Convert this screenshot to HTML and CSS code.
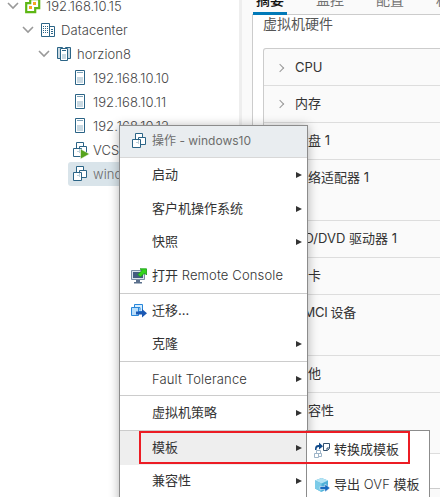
FILE: index.html
```html
<!DOCTYPE html>
<html lang="zh-CN">
<head>
<meta charset="utf-8">
<title>vSphere</title>
<link rel="stylesheet" href="styles.css">
</head>
<body>
<svg width="0" height="0" class="defs">
  <symbol id="chev" viewBox="0 0 12 8"><path d="M1 1l5 5 5-5" fill="none" stroke="#999" stroke-width="1.6"/></symbol>
  <symbol id="host" viewBox="0 0 16 16"><path d="M3.5.5h9v14h-9z" fill="#fff" stroke="#2b6486"/><path d="M5 2.500h6" stroke="#7fa3b8"/><path d="M5 7h6v6H5z" fill="#c9d9e2"/></symbol>
  <symbol id="vm" viewBox="0 0 16 16"><path d="M4.500.5h7v9h-7z" fill="#fff" stroke="#2b6486"/><path d="M7.500 4.500h7v7h-7z" fill="#fff" stroke="#2b6486"/><path d="M1.500 6.500h8v8h-8z" fill="#fff" stroke="#2b6486"/><path d="M7.500 7v4M5 9.500h2" stroke="#bdd0da"/></symbol>
</svg>
<div class="app">
  <nav class="tree">
    <div class="node l0"><svg class="chev"><use href="#chev"/></svg>
      <svg class="ico" viewBox="0 0 16 16"><path d="M5.200 1.200h9v9h-4v4h-9v-9h4z" fill="#fff" stroke="#5eb715" stroke-width="2.200"/><path d="M8 4h3v3H8zM4 8h3v3H4z" fill="#f6a623"/></svg><span>192.168.10.15</span></div>
    <div class="node l1"><svg class="chev"><use href="#chev"/></svg>
      <svg class="ico" viewBox="0 0 16 16"><path d="M1.500 1.500h8v13h-8zM9.500 4.500h5v10h-5z" fill="#fff" stroke="#2b6486"/><path d="M3 4.500h5.500M3 6.500h5.500M3 8.500h5.500M3 10.500h5.500" stroke="#2b6486" stroke-dasharray="1 1"/><path d="M11 7.500h2M11 9.500h2M11 11.500h2" stroke="#2b6486"/></svg><span>Datacenter</span></div>
    <div class="node l2"><svg class="chev"><use href="#chev"/></svg>
      <svg class="ico" viewBox="0 0 16 16"><path d="M1.500 1.500h5v11h-5zM9.500 1.500h5v11h-5z" fill="#c9d9e2" stroke="#2b6486"/><path d="M4.500 2.500h7v12h-7z" fill="#fff" stroke="#2b6486"/><path d="M6 4.500h4" stroke="#2b6486"/><path d="M6 8h4v5H6z" fill="#c9d9e2"/></svg><span>horzion8</span></div>
    <div class="node l3"><svg class="ico"><use href="#host"/></svg><span>192.168.10.10</span></div>
    <div class="node l3"><svg class="ico"><use href="#host"/></svg><span>192.168.10.11</span></div>
    <div class="node l3"><svg class="ico"><use href="#host"/></svg><span>192.168.10.12</span></div>
    <div class="node l3"><svg class="ico" viewBox="0 0 16 16"><use href="#vm"/><path d="M8.500 7l9 5-9 5z" fill="#56a31c" stroke="#fff" stroke-width=".5"/></svg><span>VCSA</span></div>
    <div class="node l3 selected"><svg class="ico"><use href="#vm"/></svg><span>windows10</span></div>
  </nav>
  <main class="main">
    <div class="tabs"><span class="tab active">摘要</span><span class="tab">监控</span><span class="tab">配置</span><span class="tab">权限</span></div>
    <section class="card">
      <h2>虚拟机硬件</h2>
      <div class="hardware">
        <div class="row latin"><i class="gt"></i>CPU</div>
        <div class="row"><i class="gt"></i>内存</div>
        <div class="row"><i class="gt"></i>硬盘 1</div>
        <div class="row tall"><i class="gt"></i>网络适配器 1</div>
        <div class="row"><i class="gt"></i>CD/DVD 驱动器 1</div>
        <div class="row"><i class="gt"></i>显卡</div>
        <div class="row tall tight"><i class="gt"></i>VMCI 设备</div>
        <div class="row"><i class="gt"></i>其他</div>
        <div class="row tall"><i class="gt"></i>兼容性</div>
      </div>
    </section>
  </main>
</div>
<div class="menu">
  <div class="head"><svg class="ico"><use href="#vm"/></svg><span>操作 - windows10</span></div>
  <div class="group g4">
    <div class="item sub"><span>启动</span></div>
    <div class="item sub"><span>客户机操作系统</span></div>
    <div class="item sub"><span>快照</span></div>
    <div class="item"><svg class="ico" viewBox="0 0 16 16"><path d="M.5 2.500h13v9H.5z" fill="#dbe3ec" stroke="#7b8da3"/><path d="M2 4h10v6H2z" fill="#435c80"/><path d="M5 12h4v2h2v1.500H3V14h2z" fill="#5b708c"/><path d="M9 .8h6.500V7l-2-2L9.500 9 7 6.500l4-4z" fill="#35d51c" stroke="#159a13" stroke-width=".8"/></svg><span>打开 <b>Remote Console</b></span></div>
  </div>
  <div class="group g2">
    <div class="item"><svg class="ico" viewBox="0 0 16 16"><path d="M3.500 1.500h8v7h-8z" fill="#d6edff" stroke="#2786d9"/><path d="M.5 4.500h7v8h-7z" fill="#b9defb" stroke="#2786d9"/><path d="M6 4.500h3v3" fill="none" stroke="#2786d9"/><path d="M5 8.500h6V6l5 4.200-5 4.300v-3H5z" fill="#1b58b3"/></svg><span>迁移...</span></div>
    <div class="item sub"><span>克隆</span></div>
  </div>
  <div class="group g1"><div class="item sub"><b>Fault Tolerance</b></div></div>
  <div class="group policy"><div class="item sub"><span>虚拟机策略</span></div></div>
  <div class="group last">
    <div class="item sub hover"><span>模板</span></div>
    <div class="item sub"><span>兼容性</span></div>
  </div>
</div>
<div class="submenu">
  <div class="item"><svg class="ico" viewBox="0 0 16 16"><path d="M9.500 1.500h6v5l-2 2h-4z" fill="#fff" stroke="#34516e"/><path d="M13 8V6h2" fill="none" stroke="#34516e"/><path d="M1 8c0-4 1-5 4-5V.5L9 4.200 5 7.500V5C3 5 2.500 6 2.500 8z" fill="#124b8b"/><path d="M2.500 8.500h4v3h-4zM.5 11.500h4v4h-4zM4.500 11.500h3v3h-3z" fill="#fff" stroke="#9db4c8"/></svg><span>转换成模板</span></div>
  <div class="item"><svg class="ico" viewBox="0 0 16 16"><path d="M7.500 1L14 3.500v8L7.500 15 1 11.500v-8z" fill="#4fb0d8"/><path d="M7.500 1L14 3.500 7.500 6.500 1 3.500z" fill="#b5e4f4"/><path d="M1 3.500l6.500 3V15L1 11.500z" fill="#7bcbe8"/><path d="M6 9.500h5V7l5 4-5 4v-2.500H6z" fill="#1769bf" stroke="#fff" stroke-width=".5"/></svg><span>导出 <b>OVF</b> 模板</span></div>
</div>
<div class="highlight"></div>
</body>
</html>
```
FILE: styles.css
```css
* { box-sizing: border-box; }
body {
  margin: 0;
  width: 440px;
  height: 497px;
  overflow: hidden;
  position: relative;
  background: #fff;
  color: #333;
  font: 13px/24px Inter, "Noto Sans CJK SC", sans-serif;
}
.defs { position: absolute; }
.app { display: flex; height: 497px; overflow: hidden; }
.ico { width: 16px; height: 16px; flex: none; overflow: visible; }

.tree { width: 239px; flex: none; margin-top: -6px; color: #454545; letter-spacing: .08px; }
.node { height: 24px; display: flex; align-items: center; padding-bottom: 1px; }
.node span { margin-left: 5px; font-weight: 350; }
.chev { width: 12px; height: 8px; margin-right: 6px; }
.l0 { padding-left: 7px; }
.l1 { padding-left: 22px; }
.l2 { padding-left: 38px; }
.l3 { margin-left: 68px; padding-left: 4px; }
.selected { background: #d9e4ea; border-radius: 3px 0 0 3px; color: #6a6a6a; }

.main { flex: none; width: 260px; border-left: 3px solid #eee; background: #fafafa; padding-left: 10px; }
.tabs { height: 14px; display: flex; gap: 26px; padding-left: 1px; color: #737373; font-size: 14px; }
.tab { width: 34px; height: 25px; line-height: 20px; margin-top: -10px; padding-left: 3px; white-space: nowrap; position: relative; }
.active { color: #111; font-weight: 500; border-bottom: 3px solid #0079b8; }
.card { height: 475px; border: 1px solid #ccc; background: #fff; padding-left: 10px; }
h2 { margin: 0; height: 33px; font-size: 14px; line-height: 18px; font-weight: 400; color: #565656; }
.hardware { border: 1px solid #ccc; border-bottom: 0; border-radius: 3px 0 0 0; background: #fafafa; }
.row { height: 37px; border-bottom: 1px solid #ddd; display: flex; padding: 5px 0 0 15px; white-space: nowrap; }
.latin { padding-top: 6px; }
.tall { height: 61px; }
.tight { letter-spacing: -.35px; }
.gt { width: 6px; height: 6px; margin: 10px 12px 0 -2px; border: solid #999; border-width: 1.5px 1.5px 0 0; transform: rotate(45deg); flex: none; }

.menu {
  position: absolute;
  left: 119px;
  top: 125px;
  width: 189px;
  height: 390px;
  border: 1px solid #8c8c8c;
  background: #fff;
  box-shadow: 0 1px 10px rgba(0, 0, 0, .3);
}
.menu b, .submenu b { font-weight: 350; letter-spacing: .15px; }
.head { height: 32px; background: #e9edf0; border-bottom: 1px solid #d8d8d8; display: flex; align-items: center; gap: 5px; padding: 0 0 1px 11px; color: #6d6d6d; font-size: 12px; }
.group { display: flex; flex-direction: column; border-bottom: 1px solid #ccc; }
.g4 { height: 136px; }
.g2 { height: 68px; }
.g1 { height: 34px; }
.policy { height: 35px; }
.last { height: 67px; border: 0; }
.item { flex: 1; display: flex; align-items: center; padding-left: 32px; white-space: nowrap; }
.item span { padding-bottom: 2px; }
.item .ico { margin: 0 5px 0 -21px; }
.sub::after { content: ""; margin-left: auto; margin-right: 5px; border: solid transparent; border-width: 3.5px 0 3.5px 6px; border-left-color: #333; }
.hover { background: #eee; }

.submenu {
  position: absolute;
  left: 306px;
  top: 430px;
  width: 124px;
  height: 80px;
  display: flex;
  flex-direction: column;
  padding-top: 1px;
  border: 1px solid #8c8c8c;
  background: #fff;
}
.submenu .item { flex: none; height: 35px; padding-left: 27px; }
.submenu .ico { margin-left: -20px; margin-right: 4px; }
.highlight { position: absolute; left: 139px; top: 431px; width: 271px; height: 33px; border: 2px solid #ec1c24; }
```
